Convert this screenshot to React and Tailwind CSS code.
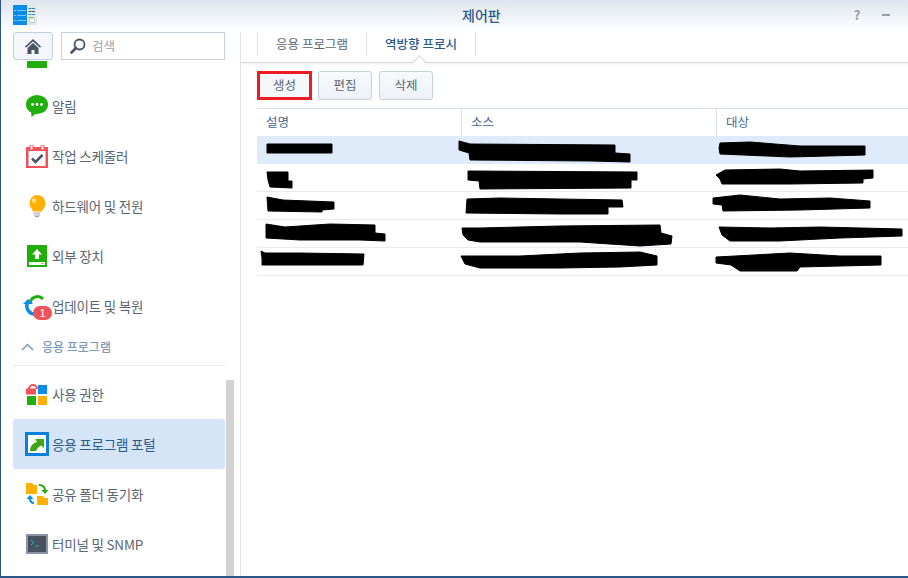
import React from "react";

const font = { fontFamily: '"Noto Sans CJK KR","Noto Sans",sans-serif' };

const Logo = () => (
  <svg width="24" height="20" viewBox="0 0 24 20" className="shrink-0">
    <rect x="0" y="0" width="14" height="20" fill="#0a8de8" />
    <rect x="14" y="0" width="10" height="20" fill="#e3e8ec" />
    <g stroke="#7fc6f5" strokeWidth="1">
      <path d="M1 5.5h2M4 5.5h9M1 10.5h2M4 10.5h9M1 15.5h2M4 15.5h9" />
    </g>
    <path d="M15.500 3.500h3M19 3.500h3" stroke="#2c7fc9" />
    <path d="M15.500 6.500h3M19 6.500h3" stroke="#4a5563" />
    <path d="M15.500 9.500h3M19 9.500h3" stroke="#2a9fd0" />
    <path d="M15.500 12.500h5" stroke="#7cc02a" />
    <circle cx="19" cy="15.500" r="2.500" fill="#fff" stroke="#b9c3cc" />
  </svg>
);

const Chat = () => (
  <svg width="22" height="22" viewBox="0 0 22 22">
    <ellipse cx="11" cy="9.500" rx="11" ry="9.500" fill="#1fae0a" />
    <path d="M5 15 L5.500 22 L12 17z" fill="#1fae0a" />
    <circle cx="6.500" cy="9.500" r="1.400" fill="#fff" />
    <circle cx="11" cy="9.500" r="1.400" fill="#fff" />
    <circle cx="15.500" cy="9.500" r="1.400" fill="#fff" />
  </svg>
);

const Calendar = () => (
  <svg width="22" height="23" viewBox="0 0 22 23">
    <rect x="0" y="2" width="22" height="21" fill="#f2515a" />
    <rect x="2.500" y="6" width="17" height="15" fill="#fff" />
    <rect x="4" y="0" width="3" height="5" rx="1" fill="#fff" stroke="#f2515a" />
    <rect x="15" y="0" width="3" height="5" rx="1" fill="#fff" stroke="#f2515a" />
    <path d="M6 13.500l3.500 3.500 7-7" fill="none" stroke="#4a5563" strokeWidth="2.500" />
  </svg>
);

const Bulb = () => (
  <svg width="18" height="22" viewBox="0 0 18 22">
    <path d="M9 0a8.500 8.500 0 0 1 8.500 8.500c0 3.500-2.500 5-3.500 8H5c-1-3-3.500-4.500-3.500-8A7.500 8.500 0 0 1 9 0z" fill="#ffb000" />
    <ellipse cx="6" cy="5.500" rx="2" ry="2.500" fill="#ffe08a" />
    <path d="M5.500 18h7M6 20h6M7 21.500h4" stroke="#9aa3ad" strokeWidth="1" />
  </svg>
);

const External = () => (
  <svg width="20" height="22" viewBox="0 0 20 22">
    <rect width="20" height="22" fill="#1fae0a" />
    <path d="M10 4l5 5.500h-3V14H8V9.500H5z" fill="#fff" />
    <rect x="2" y="17" width="16" height="3" fill="#fff" />
    <rect x="14" y="18" width="3" height="1" fill="#ffb000" />
  </svg>
);

const Update = () => (
  <svg width="29" height="24" viewBox="0 0 29 24" className="overflow-visible">
    <path d="M7 10a7.500 7.500 0 0 1 13-5" fill="none" stroke="#1fae0a" strokeWidth="3" />
    <path d="M5 8a8 8 0 0 0 8 12" fill="none" stroke="#0a8de8" strokeWidth="3.500" />
    <path d="M0 10l5-5 5 5z" fill="#0a8de8" />
    <rect x="10" y="12" width="19" height="14" rx="7" fill="#f2515a" />
    <text x="19.500" y="23" textAnchor="middle" fontSize="11" fill="#fff" fontFamily="Liberation Sans">1</text>
  </svg>
);

const Priv = () => (
  <svg width="22" height="21" viewBox="0 0 22 21">
    <path d="M3 5a4 4 0 0 1 8 0" fill="none" stroke="#f2515a" strokeWidth="2" />
    <rect x="0" y="4.500" width="10" height="6" fill="#f2515a" />
    <rect x="12" y="1" width="9" height="9" fill="#0a8de8" />
    <rect x="1" y="12" width="9" height="9" fill="#1fae0a" />
    <rect x="12" y="12" width="9" height="9" fill="#ffb000" />
  </svg>
);

const Portal = () => (
  <svg width="24" height="24" viewBox="0 0 24 24">
    <rect x="0.500" y="0.500" width="23" height="23" fill="#fff" />
    <rect x="1.500" y="1.500" width="21" height="21" fill="none" stroke="#0a80dc" strokeWidth="3" />
    <path d="M5 19c0-5 3-8 7-9l-2-3h9v9l-3-2.500c-2 1-4 3-5 5.500z" fill="#3da516" />
  </svg>
);

const Sync = () => (
  <svg width="22" height="22" viewBox="0 0 22 22">
    <path d="M0 0h6l2 2h3v9H0z" fill="#ffb000" />
    <path d="M11 13h6l1 2h4v7H11z" fill="#ffb000" />
    <path d="M13 2c4 0 6 2 6 6" fill="none" stroke="#1fae0a" strokeWidth="2" />
    <path d="M15.500 7h7l-3.500 4z" fill="#1fae0a" />
    <path d="M8 20c-3 0-4-2-4-5" fill="none" stroke="#0a8de8" strokeWidth="2" />
    <path d="M0.500 16l3.500-4 3.500 4z" fill="#0a8de8" />
  </svg>
);

const Terminal = () => (
  <svg width="22" height="20" viewBox="0 0 22 20">
    <rect x="1" y="1" width="20" height="18" fill="#47525e" stroke="#8a95a3" strokeWidth="2" />
    <path d="M5 6l3 2.500-3 2.500" fill="none" stroke="#10c0d0" strokeWidth="1" />
    <path d="M9.500 12h3" stroke="#10c0d0" strokeWidth="1" />
  </svg>
);

const SearchIcon = () => (
  <svg width="16" height="16" viewBox="0 0 16 16">
    <circle cx="9.500" cy="6.500" r="5" fill="none" stroke="#4a5563" strokeWidth="1.800" />
    <path d="M6 10l-4.500 4.500" stroke="#4a5563" strokeWidth="2.600" strokeLinecap="round" />
  </svg>
);

const HomeIcon = () => (
  <svg width="16" height="15" viewBox="0 0 16 15">
    <path d="M8 0L0 7.500l1 1.200L8 2.500l7 6.200 1-1.200z" fill="#4a5563" />
    <path d="M2.500 9L8 4l5.500 5v6H9.500v-4h-3v4h-4z" fill="#4a5563" />
  </svg>
);

const items = [
  { label: "", icon: <div className="w-5 h-[23px] bg-[#1fae0a]" /> },
  { label: "알림", icon: <Chat /> },
  { label: "작업 스케줄러", icon: <Calendar /> },
  { label: "하드웨어 및 전원", icon: <Bulb /> },
  { label: "외부 장치", icon: <External /> },
  { label: "업데이트 및 복원", icon: <Update /> },
];
const items2 = [
  { label: "사용 권한", icon: <Priv /> },
  { label: "응용 프로그램 포털", icon: <Portal />, active: true },
  { label: "공유 폴더 동기화", icon: <Sync /> },
  { label: "터미널 및 SNMP", icon: <Terminal /> },
];

function Item({ label, icon, active }) {
  return (
    <div className={`h-[50px] w-[212px] flex items-center rounded-[3px] shrink-0 ${active ? "bg-[#d5e5f7] text-[#2b5a8c]" : "text-[#5a6572]"}`}>
      <div className="w-[39px] pl-[9px] flex items-center justify-center shrink-0">{icon}</div>
      <span className="text-[13.500px] tracking-[-0.2px] whitespace-nowrap">{label}</span>
    </div>
  );
}

const scribbles = [
  "267,144 332,144 332,153 267,153",
  "459,141 470,144 615,145 615,153 630,154 630,162 590,161 470,160 469,153 459,150",
  "267,172 288,172 288,181 292,181 292,188 270,187 268,180",
  "468,171 637,172 637,180 631,180 631,188 480,189 479,181 468,180",
  "267,197 283,200 334,202 334,209 322,210 322,212 268,211",
  "467,199 500,198 622,200 623,207 608,207 608,214 560,214 466,213",
  "266,224 285,227 330,224 375,225 375,233 385,234 385,241 360,240 300,240 266,238",
  "462,228 480,228 560,226 660,225 661,233 672,236 671,244 640,246 580,242 480,242 468,240 463,235",
  "261,251 265,253 300,253 364,254 363,265 262,265 262,258",
  "461,256 520,256 580,253 640,252 657,256 657,265 620,267 560,268 480,268 465,264",
  "720,143 750,142 800,146 865,146 865,155 790,157 720,154 719,148",
  "716,175 725,170 780,169 800,171 873,170 873,178 863,179 863,183 790,184 722,184 720,179",
  "713,198 740,195 780,199 830,198 870,201 870,208 800,210 723,211 722,205 713,204",
  "719,227 770,228 820,227 902,229 902,236 840,238 780,241 730,241 722,235",
  "716,257 735,256 790,253 840,256 881,256 881,265 800,267 797,271 740,271 731,265 716,263",
];

function Btn({ children, red }) {
  return (
    <div
      className={`h-[29px] flex items-center justify-center text-[12.500px] text-[#5a6572] ${
        red
          ? "w-[55px] border-[3px] border-[#ed1c24] bg-[#f5f8fb]"
          : "w-[54px] border border-[#c5d0dc] rounded-[3px] bg-gradient-to-b from-[#f7f9fc] to-[#eef2f7]"
      }`}
    >
      {children}
    </div>
  );
}

export default function App() {
  return (
    <div style={font} className="relative w-[908px] h-[578px] overflow-hidden bg-white flex flex-col border-l border-b-2 border-[#2a5688]">
      <header className="h-8 shrink-0 flex items-start pl-3 pt-[5px] bg-gradient-to-b from-[#dfe5ee] to-white">
        <Logo />
        <span className="ml-[425px] text-[14px] font-medium text-[#2b5a8c] leading-5">제어판</span>
        <span className="ml-[353px] text-[#9a9da1] font-bold text-[13px] leading-5">?</span>
        <span className="ml-[22px] mt-[9px] w-2 h-[2px] bg-[#9a9da1]" />
      </header>

      <div className="flex-1 min-h-0 flex">
        <aside className="relative w-[240px] shrink-0 border-r border-[#e1e4e8] flex flex-col">
          <div className="h-[29px] shrink-0 pl-3 flex gap-2">
            <div className="w-10 h-[28px] rounded-[3px] border border-[#c5d0dc] bg-[#f3f6fb] flex items-center justify-center">
              <HomeIcon />
            </div>
            <div className="w-[164px] h-[28px] border border-[#c5d0dc] bg-white flex items-center pl-2 gap-1.5">
              <SearchIcon />
              <span className="text-[12.500px] text-[#9aa1a9]">검색</span>
            </div>
          </div>
          <div className="flex-1 min-h-0 overflow-hidden pl-3">
            <div className="-mt-[30px] flex flex-col">
              {items.map((it, i) => (
                <Item key={i} {...it} />
              ))}
              <div className="h-[33px] w-[212px] shrink-0 mt-[2px] border-b border-[#e9ecef] flex items-center gap-2 pl-2 pb-1 text-[#7a9ab8]">
                <svg width="13" height="8" viewBox="0 0 13 8">
                  <path d="M1 7l5.500-5.500L12 7" fill="none" stroke="#7a9ab8" strokeWidth="1.500" />
                </svg>
                <span className="text-[12px] font-medium">응용 프로그램</span>
              </div>
              <div className="h-[3px] shrink-0" />
              {items2.map((it, i) => (
                <Item key={i} {...it} />
              ))}
            </div>
          </div>
          <div className="absolute left-[225px] top-[348px] bottom-0 w-2 bg-[#d2d2d2]" />
        </aside>

        <main className="flex-1 min-w-0 pl-4 flex flex-col">
          <div className="relative h-[31px] shrink-0 -mr-4 -ml-4 pl-4 border-b border-[#d4d6d9] shadow-[0_2px_3px_rgba(0,0,0,0.04)] flex">
            <div className="h-[24px] w-[110px] border-l border-r border-[#dfe3e8] flex items-center justify-center text-[12.500px] text-[#5a6572]">
              응용 프로그램
            </div>
            <div className="h-[24px] w-[109px] border-r border-[#dfe3e8] flex items-center justify-center text-[12.500px] font-medium text-[#2b5a8c]">
              역방향 프로시
            </div>
            <div className="absolute left-[174px] -bottom-[4px] w-[9px] h-[9px] rotate-45 bg-white border-l border-t border-[#d4d6d9]" />
          </div>

          <div className="flex gap-[6px] pt-2 h-[45px] shrink-0">
            <Btn red>생성</Btn>
            <Btn>편집</Btn>
            <div className="ml-[1px]">
              <Btn>삭제</Btn>
            </div>
          </div>

          <div className="w-[651px] border-t border-[#dbe1e8]">
            <div className="grid grid-cols-[204px_255px_192px] h-[27px] text-[12.500px] text-[#3f6a98]">
              <div className="pl-[9px] flex items-center">설명</div>
              <div className="pl-[9px] border-l border-[#dbe1e8] flex items-center">소스</div>
              <div className="pl-[9px] border-l border-[#dbe1e8] flex items-center">대상</div>
            </div>
            <div className="h-[28px] bg-[#dfeafa]" />
            <div className="h-[28px] border-b border-[#e6ebf1]" />
            <div className="h-[28px] border-b border-[#e6ebf1]" />
            <div className="h-[28px] border-b border-[#e6ebf1]" />
            <div className="h-[28px] border-b border-[#e6ebf1]" />
          </div>
        </main>
      </div>

      <svg width="908" height="578" className="absolute -left-px top-0 pointer-events-none">
        {scribbles.map((p, i) => (
          <polygon key={i} points={p} fill="#000" stroke="#000" strokeWidth="1" strokeLinejoin="round" />
        ))}
      </svg>
    </div>
  );
}
